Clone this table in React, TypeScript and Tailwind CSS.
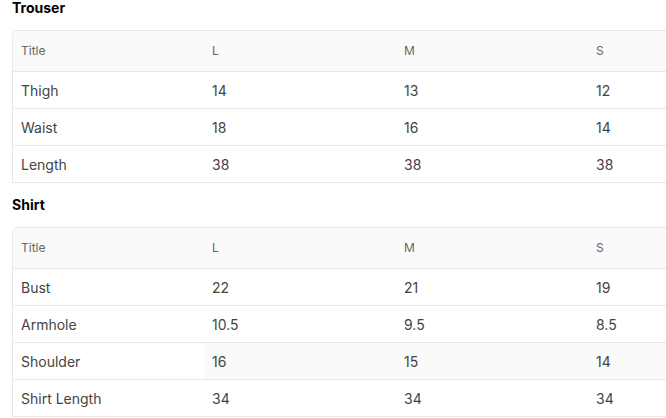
import React from 'react'

type Row = { title: string; values: string[]; hovered?: boolean }

const trouser: Row[] = [
  { title: 'Thigh', values: ['14', '13', '12'] },
  { title: 'Waist', values: ['18', '16', '14'] },
  { title: 'Length', values: ['38', '38', '38'] },
]

const shirt: Row[] = [
  { title: 'Bust', values: ['22', '21', '19'] },
  { title: 'Armhole', values: ['10.5', '9.5', '8.5'] },
  { title: 'Shoulder', values: ['16', '15', '14'], hovered: true },
  { title: 'Shirt Length', values: ['34', '34', '34'] },
]

const sizes = ['L', 'M', 'S']

function SizeTable({ name, rows }: { name: string; rows: Row[] }) {
  return (
    <section>
      <h3 className="text-[14px] leading-[16px] font-bold text-black">{name}</h3>
      <div className="mt-[14px] w-[769px] border-l border-t border-[#e8e8e8] rounded-tl-md overflow-hidden">
        <div className="flex h-[41px] items-center bg-[#fafafa] border-b border-[#e8e8e8] text-[12px] text-[#666666]">
          <div className="w-[191px] px-2">Title</div>
          {sizes.map((s) => (
            <div key={s} className="w-[192px] px-2">
              {s}
            </div>
          ))}
        </div>
        {rows.map((row) => (
          <div
            key={row.title}
            className="flex h-[37px] border-b border-[#e8e8e8] text-[14px] text-[#444444]"
          >
            <div className="w-[191px] px-2 flex items-center bg-white">{row.title}</div>
            {row.values.map((v, i) => (
              <div
                key={i}
                className={`w-[192px] px-2 flex items-center ${row.hovered ? 'bg-[#fafafa]' : 'bg-white'}`}
              >
                {v}
              </div>
            ))}
          </div>
        ))}
      </div>
    </section>
  )
}

export default function App() {
  return (
    <div
      className="w-[666px] h-[418px] overflow-hidden bg-white pl-3"
      style={{ fontFamily: 'Inter, "Noto Sans", sans-serif' }}
    >
      <SizeTable name="Trouser" rows={trouser} />
      <div className="mt-[14px]">
        <SizeTable name="Shirt" rows={shirt} />
      </div>
    </div>
  )
}
